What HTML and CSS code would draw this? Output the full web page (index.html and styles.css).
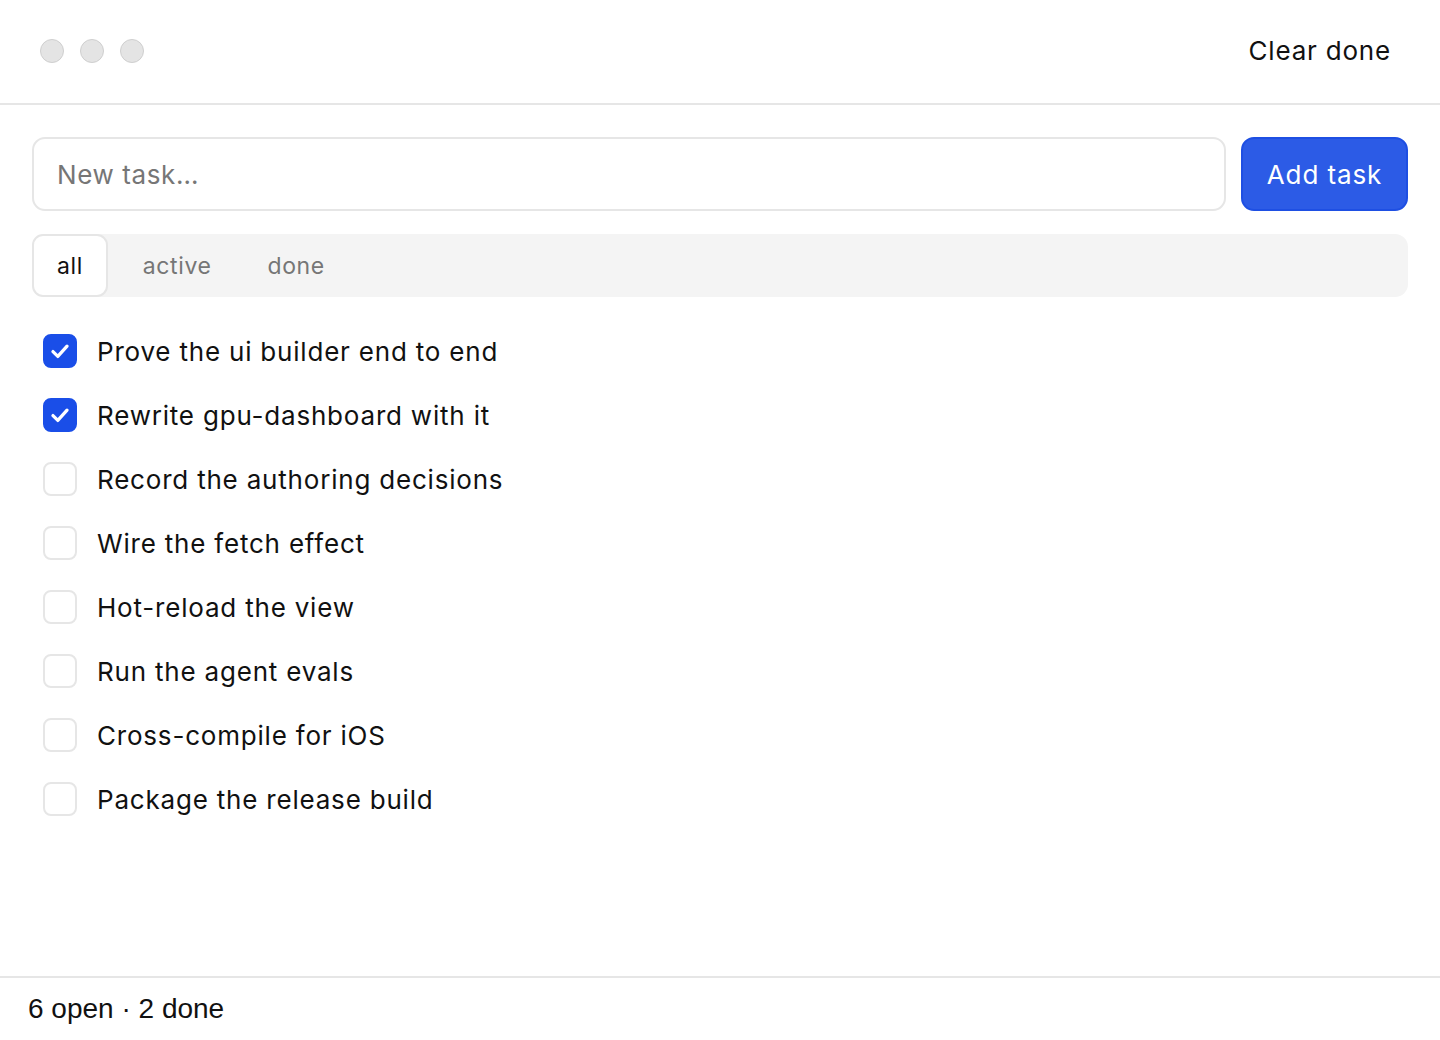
FILE: index.html
```html
<!DOCTYPE html>
<html lang="en">
<head>
    <meta charset="UTF-8">
    <meta name="viewport" content="width=device-width, initial-scale=1.0">
    <title>Tasks</title>
    <link rel="stylesheet" href="styles.css">
</head>
<body>
    <div class="window">
        <header class="titlebar">
            <div class="dots">
                <span class="dot"></span>
                <span class="dot"></span>
                <span class="dot"></span>
            </div>
            <button class="clear-btn">Clear done</button>
        </header>
        <main>
            <div class="composer">
                <input class="task-input" type="text" placeholder="New task…">
                <button class="add-btn">Add task</button>
            </div>
            <div class="tabs">
                <button class="tab selected">all</button>
                <button class="tab">active</button>
                <button class="tab">done</button>
            </div>
            <ul class="task-list">
                <li class="task"><span class="check checked"><svg viewBox="0 0 24 24"><path d="M5.5 12.5l4.5 4.5 8.5-9.5" fill="none" stroke="#fff" stroke-width="3" stroke-linecap="round" stroke-linejoin="round"/></svg></span>Prove the ui builder end to end</li>
                <li class="task"><span class="check checked"><svg viewBox="0 0 24 24"><path d="M5.5 12.5l4.5 4.5 8.5-9.5" fill="none" stroke="#fff" stroke-width="3" stroke-linecap="round" stroke-linejoin="round"/></svg></span>Rewrite gpu-dashboard with it</li>
                <li class="task"><span class="check"></span>Record the authoring decisions</li>
                <li class="task"><span class="check"></span>Wire the fetch effect</li>
                <li class="task"><span class="check"></span>Hot-reload the view</li>
                <li class="task"><span class="check"></span>Run the agent evals</li>
                <li class="task"><span class="check"></span>Cross-compile for iOS</li>
                <li class="task"><span class="check"></span>Package the release build</li>
            </ul>
        </main>
        <footer class="statusbar">6 open · 2 done</footer>
    </div>
</body>
</html>
```

FILE: styles.css
```css
* {
    margin: 0;
    padding: 0;
    box-sizing: border-box;
}

body {
    font-family: Inter, "Noto Sans", sans-serif;
    background: #ffffff;
    color: #111111;
}

.window {
    height: 1040px;
    display: flex;
    flex-direction: column;
    border-radius: 14px;
    overflow: hidden;
}

.titlebar {
    height: 105px;
    flex-shrink: 0;
    display: flex;
    align-items: center;
    justify-content: space-between;
    padding: 0 49px 2px 40px;
    border-bottom: 2px solid #e6e6e6;
}

.dots {
    display: flex;
    gap: 16px;
}

.dot {
    width: 24px;
    height: 24px;
    border-radius: 50%;
    background: #e4e4e4;
    border: 1px solid #cfcfcf;
}

button {
    font-family: inherit;
    border: none;
    background: none;
    cursor: pointer;
}

.clear-btn {
    font-size: 26px;
    letter-spacing: 0.8px;
    color: #111111;
}

main {
    flex: 1;
    padding: 32px 32px 0 32px;
}

.composer {
    display: flex;
    gap: 15px;
}

.task-input {
    flex: 1;
    height: 74px;
    border: 2px solid #e6e6e6;
    border-radius: 13px;
    padding: 0 23px;
    font-family: inherit;
    font-size: 26px;
    letter-spacing: 0.6px;
    color: #111111;
    outline: none;
}

.task-input::placeholder {
    color: #767676;
}

.add-btn {
    width: 167px;
    height: 74px;
    background: #2c5be6;
    border: 2px solid #1e4fe3;
    border-radius: 13px;
    color: #ffffff;
    font-size: 26px;
    letter-spacing: 0.9px;
}

.tabs {
    margin-top: 23px;
    height: 63px;
    display: flex;
    background: #f4f4f4;
    border-radius: 13px;
}

.tab {
    font-size: 23px;
    letter-spacing: 0.6px;
    color: #767676;
    padding: 0 28px;
}

.tab.selected {
    color: #111111;
    background: #ffffff;
    border: 2px solid #e6e6e6;
    border-radius: 11px;
    padding: 0 23px;
    margin-right: 7px;
}

.task-list {
    list-style: none;
    margin-top: 22px;
    padding-left: 11px;
}

.task {
    height: 64px;
    display: flex;
    align-items: center;
    gap: 20px;
    font-size: 26px;
    letter-spacing: 0.8px;
    color: #111111;
}

.check {
    width: 34px;
    height: 34px;
    border: 2px solid #e6e6e6;
    border-radius: 8px;
    display: flex;
    align-items: center;
    justify-content: center;
    flex-shrink: 0;
}

.check.checked {
    background: #1a4ee8;
    border-color: #1a4ee8;
}

.check svg {
    width: 26px;
    height: 26px;
}

.statusbar {
    height: 64px;
    flex-shrink: 0;
    border-top: 2px solid #e6e6e6;
    display: flex;
    align-items: center;
    padding-left: 28px;
    font-family: "Liberation Sans", Arial, sans-serif;
    font-size: 28px;
    color: #111111;
}
```
